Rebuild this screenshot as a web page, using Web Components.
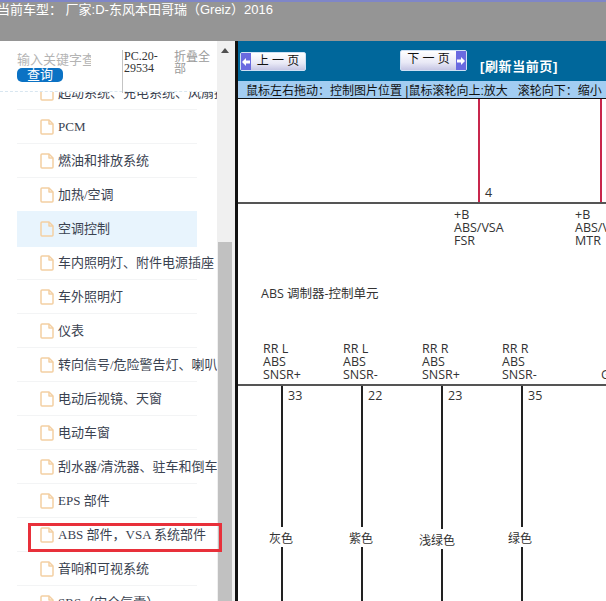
<!DOCTYPE html>
<html lang="zh">
<head>
<meta charset="utf-8">
<title>电路图</title>
<style>
html, body { margin: 0; height: 100%; overflow: hidden; background: #fff; }
body { font-family: "Liberation Sans", "Noto Sans CJK SC", sans-serif; }
</style>
</head>
<body>
<manual-app>
    <car-bar slot="top">当前车型： 厂家:D-东风本田哥瑞（Greiz）2016</car-bar>
    <side-panel slot="side">
        <tree-item clipped>起动系统、充电系统、风扇控制</tree-item>
        <tree-item>PCM</tree-item>
        <tree-item>燃油和排放系统</tree-item>
        <tree-item>加热/空调</tree-item>
        <tree-item selected>空调控制</tree-item>
        <tree-item>车内照明灯、附件电源插座</tree-item>
        <tree-item>车外照明灯</tree-item>
        <tree-item>仪表</tree-item>
        <tree-item>转向信号/危险警告灯、喇叭</tree-item>
        <tree-item>电动后视镜、天窗</tree-item>
        <tree-item>电动车窗</tree-item>
        <tree-item>刮水器/清洗器、驻车和倒车</tree-item>
        <tree-item>EPS 部件</tree-item>
        <tree-item>ABS 部件，VSA 系统部件</tree-item>
        <tree-item>音响和可视系统</tree-item>
        <tree-item>SRS（安全气囊）</tree-item>
    </side-panel>
    <page-toolbar slot="tools"></page-toolbar>
    <wire-diagram slot="diagram"></wire-diagram>
</manual-app>

<script>
class ManualApp extends HTMLElement {
    connectedCallback() {
        this.attachShadow({ mode: 'open' });
        this.shadowRoot.innerHTML = `
            <style>
                :host { display: flex; flex-direction: column; height: 601px; width: 606px; overflow: hidden; }
                .main { flex: 1; display: flex; min-height: 0; }
                .side { width: 235px; flex: none; }
                .divider { width: 3px; flex: none; background: #111; }
                .right { flex: 1; min-width: 0; display: flex; flex-direction: column; }
            </style>
            <slot name="top"></slot>
            <div class="main">
                <div class="side"><slot name="side"></slot></div>
                <div class="divider"></div>
                <div class="right">
                    <slot name="tools"></slot>
                    <slot name="diagram"></slot>
                </div>
            </div>
        `;
    }
}

class CarBar extends HTMLElement {
    connectedCallback() {
        this.attachShadow({ mode: 'open' });
        this.shadowRoot.innerHTML = `
            <style>
                :host {
                    display: block;
                    height: 39px;
                    background: #959595;
                    border-top: 2px solid #7f86c8;
                    color: #fff;
                    font-size: 13px;
                    line-height: 16px;
                    overflow: hidden;
                }
                div { margin-left: -3px; white-space: pre; }
            </style>
            <div><slot></slot></div>
        `;
    }
}

class SidePanel extends HTMLElement {
    connectedCallback() {
        this.attachShadow({ mode: 'open' });
        this.shadowRoot.innerHTML = `
            <style>
                :host { display: flex; height: 560px; position: relative; background: #fff; }
                .col { width: 217px; flex: none; display: flex; flex-direction: column; }
                .search {
                    height: 51px;
                    flex: none;
                    display: flex;
                    padding-left: 17px;
                    border-bottom: 1px dashed #d8e6f0;
                    box-sizing: border-box;
                    background: #fff;
                }
                .key { width: 105px; flex: none; padding-top: 11px; }
                .ph { width: 74px; height: 16px; overflow: hidden; white-space: nowrap; color: #b4b4b4; font-size: 13px; line-height: 16px; }
                .btn {
                    width: 46px; height: 14px; border-radius: 5px; background: #0b72c4;
                    color: #fff; font-size: 13px; line-height: 14px; text-align: center;
                }
                .code {
                    width: 52px; height: 43px; flex: none; padding-left: 1px; margin-top: 9px; box-sizing: border-box;
                    border-left: 1px solid #c4c4c4;
                    color: #333; font: 12px/12px "Liberation Serif", serif;
                }
                .fold { width: 38px; margin-top: 10px; color: #9a9a9a; font-size: 12px; line-height: 12px; }
                .tree { flex: 1; overflow: hidden; min-height: 0; }
                .rows { margin-top: -16px; }
                .bar { width: 18px; flex: none; background: #f0f0f0; display: flex; flex-direction: column; align-items: flex-start; }
                .arrow {
                    width: 0; height: 0; margin: 7px 0 0 4px;
                    border: 4px solid transparent; border-top: 0; border-bottom: 5px solid #505050;
                }
                .thumb { width: 14px; margin: 189px 0 0 1px; flex: 1; background: #c1c1c1; }
                .mark {
                    position: absolute; left: 28px; top: 482px; width: 188px; height: 23px;
                    border: 3px solid #e8303a; pointer-events: none;
                }
            </style>
            <div class="col">
                <div class="search">
                    <div class="key">
                        <div class="ph">输入关键字查</div>
                        <div class="btn">查询</div>
                    </div>
                    <div class="code">PC.20-<br>29534</div>
                    <div class="fold">折叠全部</div>
                </div>
                <div class="tree"><div class="rows"><slot></slot></div></div>
            </div>
            <div class="bar"><div class="arrow"></div><div class="thumb"></div></div>
            <div class="mark"></div>
        `;
    }
}

class TreeItem extends HTMLElement {
    connectedCallback() {
        this.attachShadow({ mode: 'open' });
        this.shadowRoot.innerHTML = `
            <style>
                :host {
                    display: block;
                    height: 34px;
                    box-sizing: border-box;
                    margin-left: 17px;
                    width: 180px;
                    border-bottom: 1px solid #f3f4f5;
                    color: #3a4250;
                    font: 13px/16px "Liberation Serif", "Noto Sans CJK SC", serif;
                }
                :host([selected]) { background: #e8f4fd; box-shadow: 0 1px 0 #e8f4fd, 0 -1px 0 #e8f4fd; border-color: #e8f4fd; }
                .row { display: flex; align-items: center; gap: 4px; height: 33px; padding-left: 23px; white-space: nowrap; }
                svg { flex: none; }
            </style>
            <div class="row">
                <svg width="14" height="16" viewBox="0 0 14 16" fill="none" stroke="#f3cfa2" stroke-width="1.5" stroke-linejoin="round">
                    <path d="M2 1H9L13 5V14Q13 15 12 15H2Q1 15 1 14V2Q1 1 2 1Z"/>
                    <path d="M9 1V5H13"/>
                </svg>
                <span><slot></slot></span>
            </div>
        `;
    }
}

class PageButton extends HTMLElement {
    connectedCallback() {
        const dir = this.getAttribute('dir-arrow');
        const arrow = dir === 'left' ? 'M1 5L5 1V3.5H9V6.5H5V9Z' : 'M9 5L5 1V3.5H1V6.5H5V9Z';
        this.attachShadow({ mode: 'open' });
        this.shadowRoot.innerHTML = `
            <style>
                :host {
                    display: flex;
                    align-items: stretch;
                    box-sizing: border-box;
                    width: 67px;
                    border: 1px solid #cfe0f4;
                    border-radius: 2px;
                    background: linear-gradient(#ffffff, #e9e9f6 60%, #c6c6e4);
                    color: #111;
                    font-size: 12px;
                    flex-direction: ${dir === 'left' ? 'row' : 'row-reverse'};
                }
                .cap { width: 10px; flex: none; background: #6a6ae0; display: flex; align-items: center; justify-content: center; }
                .txt { flex: 1; text-align: center; white-space: pre; line-height: 17px; }
            </style>
            <div class="cap"><svg width="10" height="10" viewBox="0 0 10 10"><path d="${arrow}" fill="#fff"/></svg></div>
            <div class="txt"><slot></slot></div>
        `;
    }
}

class PageToolbar extends HTMLElement {
    connectedCallback() {
        this.attachShadow({ mode: 'open' });
        this.shadowRoot.innerHTML = `
            <style>
                :host { display: block; flex: none; }
                .tools { height: 40px; background: #00679b; display: flex; align-items: flex-start; box-sizing: border-box; }
                .prev { margin: 11px 0 0 2px; width: 66px; height: 19px; }
                .next { margin: 9px 0 0 94px; height: 21px; }
                .fresh { margin: 18px 0 0 13px; color: #fff; font-weight: 700; font-size: 13px; line-height: 16px; letter-spacing: .6px; white-space: nowrap; }
                .hint {
                    height: 18px; box-sizing: border-box; padding: 2px 0 0 8px;
                    background: #a3cdf2; border-bottom: 1px solid #111;
                    color: #111; font-size: 12px; line-height: 17px; white-space: pre; overflow: hidden;
                }
            </style>
            <div class="tools">
                <page-button class="prev" dir-arrow="left">上 一 页</page-button>
                <page-button class="next" dir-arrow="right">下 一 页</page-button>
                <div class="fresh">[刷新当前页]</div>
            </div>
            <div class="hint">鼠标左右拖动：控制图片位置 |鼠标滚轮向上:放大   滚轮向下：缩小</div>
        `;
    }
}

class WireDiagram extends HTMLElement {
    connectedCallback() {
        // positions are relative to the diagram's top left corner (238,100)
        const pins = [
            { x: 44, lx: 25, num: 33, a: 'RR L', c: 'SNSR+', color: '灰色', cx: 43, cy: 428 },
            { x: 124, lx: 105, num: 22, a: 'RR L', c: 'SNSR-', color: '紫色', cx: 123, cy: 428 },
            { x: 204, lx: 184, num: 23, a: 'RR R', c: 'SNSR+', color: '浅绿色', cx: 199, cy: 430 },
            { x: 284, lx: 264, num: 35, a: 'RR R', c: 'SNSR-', color: '绿色', cx: 282, cy: 428 },
        ];
        const wires = pins.map(p => `
            <div class="label" style="left:${p.lx}px;top:243px">${p.a}<br>ABS<br>${p.c}</div>
            <div class="wire" style="left:${p.x - 1}px;top:285px;bottom:0"></div>
            <div class="num" style="left:${p.x + 6}px;top:289px">${p.num}</div>
            <div class="color" style="left:${p.cx}px;top:${p.cy}px">${p.color}</div>
        `).join('');
        this.attachShadow({ mode: 'open' });
        this.shadowRoot.innerHTML = `
            <style>
                :host {
                    display: block; flex: 1; min-height: 0; position: relative; overflow: hidden;
                    background: #fff; color: #333;
                    font: 12.5px/13px "Open Sans", "Noto Sans CJK SC", sans-serif;
                }
                div { position: absolute; }
                .bus { left: 0; right: 0; height: 2px; background: #555; }
                .red { width: 2px; top: 0; height: 103px; background: #c8264c; }
                .wire { width: 2px; background: #222; }
                .label { white-space: nowrap; }
                .num { line-height: 16px; }
                .color {
                    transform: translateX(-50%); padding: 2px 2px 0; height: 18px;
                    line-height: 20px; font-size: 12px; background: #fff; white-space: nowrap;
                }
            </style>
            <div class="red" style="left:240px"></div>
            <div class="red" style="left:362px"></div>
            <div class="num" style="left:247px;top:86px">4</div>
            <div class="bus" style="top:103px"></div>
            <div class="label" style="left:216px;top:109px">+B<br>ABS/VSA<br>FSR</div>
            <div class="label" style="left:337px;top:109px">+B<br>ABS/VSA<br>MTR</div>
            <div class="label" style="left:23px;top:188px">ABS 调制器-控制单元</div>
            ${wires}
            <div class="bus" style="top:285px"></div>
            <div class="label" style="left:363px;top:269px">G</div>
        `;
    }
}

customElements.define('manual-app', ManualApp);
customElements.define('car-bar', CarBar);
customElements.define('side-panel', SidePanel);
customElements.define('tree-item', TreeItem);
customElements.define('page-button', PageButton);
customElements.define('page-toolbar', PageToolbar);
customElements.define('wire-diagram', WireDiagram);
</script>
</body>
</html>
